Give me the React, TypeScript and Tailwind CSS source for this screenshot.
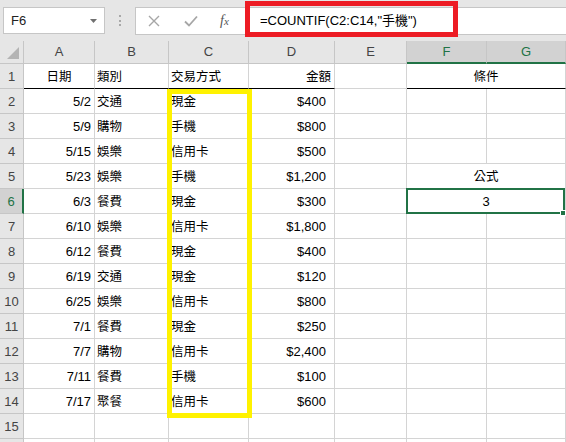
import React from "react";

const FONT = { fontFamily: '"Liberation Sans", "Noto Sans CJK TC", sans-serif' };

const data: [string, string, string, string][] = [
  ["5/2", "交通", "現金", "$400"],
  ["5/9", "購物", "手機", "$800"],
  ["5/15", "娛樂", "信用卡", "$500"],
  ["5/23", "娛樂", "手機", "$1,200"],
  ["6/3", "餐費", "現金", "$300"],
  ["6/10", "娛樂", "信用卡", "$1,800"],
  ["6/12", "餐費", "現金", "$400"],
  ["6/19", "交通", "現金", "$120"],
  ["6/25", "娛樂", "信用卡", "$800"],
  ["7/1", "餐費", "現金", "$250"],
  ["7/7", "購物", "信用卡", "$2,400"],
  ["7/11", "餐費", "手機", "$100"],
  ["7/17", "聚餐", "信用卡", "$600"],
];

const letters = ["A", "B", "C", "D", "E", "F", "G"];

function RowHead({ n, active }: { n?: number; active?: boolean }) {
  return active ? (
    <div className="h-[25px] flex items-end justify-center pb-[3px] bg-[#d2d2d2] border-b border-[#c6c6c6] border-r-2 border-r-[#217346] text-[13px] leading-[16px] text-[#217346]">
      {n}
    </div>
  ) : (
    <div className="h-[25px] flex items-end justify-center pb-[3px] bg-[#e6e6e6] border-b border-r border-[#c6c6c6] text-[13px] leading-[16px] text-[#444]">
      {n}
    </div>
  );
}

const cell = "h-[25px] flex items-end pb-[3px] border-b border-r border-[#d4d4d4] leading-[16px] text-black overflow-hidden whitespace-nowrap";

export default function App() {
  return (
    <div className="relative w-[566px] h-[442px] overflow-hidden bg-white" style={FONT}>
      {/* toolbar */}
      <div className="h-[41px] bg-[#e6e6e6] flex items-start pt-[7px]">
        <div className="ml-[3px] w-[102px] h-[27px] bg-white border border-[#c6c6c6] flex items-center pl-[7px] pr-[7px]">
          <span className="text-[13px] text-[#222] flex-1">F6</span>
          <svg width="7" height="4" viewBox="0 0 7 4">
            <path d="M0 0 L7 0 L3.5 4 Z" fill="#707070" />
          </svg>
        </div>
        <div className="w-[30px] h-[27px] flex flex-col items-center justify-center gap-[2.5px]">
          <div className="w-[2px] h-[2px] bg-[#a8a8a8]" />
          <div className="w-[2px] h-[2px] bg-[#a8a8a8]" />
          <div className="w-[2px] h-[2px] bg-[#a8a8a8]" />
        </div>
        <div className="flex-1 h-[28px] bg-white border border-r-0 border-[#c6c6c6] flex items-center">
          <div className="w-[109px] flex items-center">
            <svg className="ml-[12px]" width="12" height="12" viewBox="0 0 12 12">
              <path d="M1 1 L11 11 M11 1 L1 11" stroke="#a6a6a6" strokeWidth="1.4" />
            </svg>
            <svg className="ml-[24px]" width="14" height="12" viewBox="0 0 14 12">
              <path d="M1 6.5 L5 10.5 L13 1.5" stroke="#a6a6a6" strokeWidth="1.8" fill="none" />
            </svg>
            <span
              className="ml-[22px] text-[14px] italic text-[#555] leading-none"
              style={{ fontFamily: '"Liberation Serif", serif' }}
            >
              f<span className="text-[11px]">x</span>
            </span>
          </div>
          <span className="ml-[15px] text-[13px] text-black whitespace-nowrap">
            =COUNTIF(C2:C14,"手機")
          </span>
        </div>
      </div>

      {/* sheet */}
      <div className="grid grid-cols-[24px_71px_74px_80px_86px_72px_80px_79px]">
        {/* column headers */}
        <div className="h-[23px] bg-[#e6e6e6] border-b border-r border-[#c6c6c6] flex items-end justify-end p-[3px]">
          <svg width="12" height="12" viewBox="0 0 12 12" className="mr-[1px] mb-[1px]">
            <path d="M12 0 L12 12 L0 12 Z" fill="#b4b4b4" />
          </svg>
        </div>
        {letters.map((l) =>
          l === "F" || l === "G" ? (
            <div
              key={l}
              className="h-[23px] bg-[#d2d2d2] border-r border-[#c6c6c6] border-b-2 border-b-[#217346] flex items-center justify-center text-[13px] text-[#217346]"
            >
              {l}
            </div>
          ) : (
            <div
              key={l}
              className="h-[23px] bg-[#e6e6e6] border-b border-r border-[#c6c6c6] flex items-center justify-center text-[13px] text-[#444]"
            >
              {l}
            </div>
          )
        )}

        {/* row 1 */}
        <RowHead n={1} />
        <div className={`${cell} justify-center text-[12.5px] border-b-black`}>日期</div>
        <div className={`${cell} pl-[2px] text-[12.5px] border-b-black`}>類別</div>
        <div className={`${cell} pl-[2px] text-[12.5px] border-b-black`}>交易方式</div>
        <div className={`${cell} justify-end pr-[3px] text-[12.5px] border-b-black`}>金額</div>
        <div className={cell} />
        <div className={`${cell} col-span-2 justify-center text-[12.5px] border-b-black`}>條件</div>

        {data.map((r, i) => {
          const n = i + 2;
          return (
            <React.Fragment key={n}>
              <RowHead n={n} active={n === 6} />
              <div className={`${cell} justify-end pr-[3px] text-[13px]`}>{r[0]}</div>
              <div className={`${cell} pl-[2px] text-[12.5px]`}>{r[1]}</div>
              <div className={`${cell} pl-[2px] text-[12.5px]`}>{r[2]}</div>
              <div className={`${cell} justify-end pr-[8px] text-[13px]`}>{r[3]}</div>
              <div className={cell} />
              {n === 5 ? (
                <div className={`${cell} col-span-2 justify-center text-[12.5px]`}>公式</div>
              ) : n === 6 ? (
                <div className={`${cell} col-span-2 justify-center text-[13px] text-[#333] relative overflow-visible`}>
                  3
                  <div className="absolute left-[-1px] top-[-1px] w-[calc(100%+1px)] h-[26px] border-2 border-[#217346]" />
                  <div className="absolute right-[-1px] bottom-[-3px] w-[6px] h-[6px] bg-[#217346] border border-white" />
                </div>
              ) : (
                <>
                  <div className={cell} />
                  <div className={cell} />
                </>
              )}
            </React.Fragment>
          );
        })}

        {[15, 16].map((n) => (
          <React.Fragment key={n}>
            <RowHead n={n === 15 ? 15 : undefined} />
            <div className={cell} />
            <div className={cell} />
            <div className={cell} />
            <div className={cell} />
            <div className={cell} />
            <div className={cell} />
            <div className={cell} />
          </React.Fragment>
        ))}
      </div>

      {/* annotation overlays */}
      <div className="absolute left-[245px] top-[1px] w-[213px] h-[36px] border-[5px] border-[#ed1c24]" />
      <div className="absolute left-[167px] top-[89px] w-[85px] h-[329px] border-[5px] border-[#fff200]" />
    </div>
  );
}
